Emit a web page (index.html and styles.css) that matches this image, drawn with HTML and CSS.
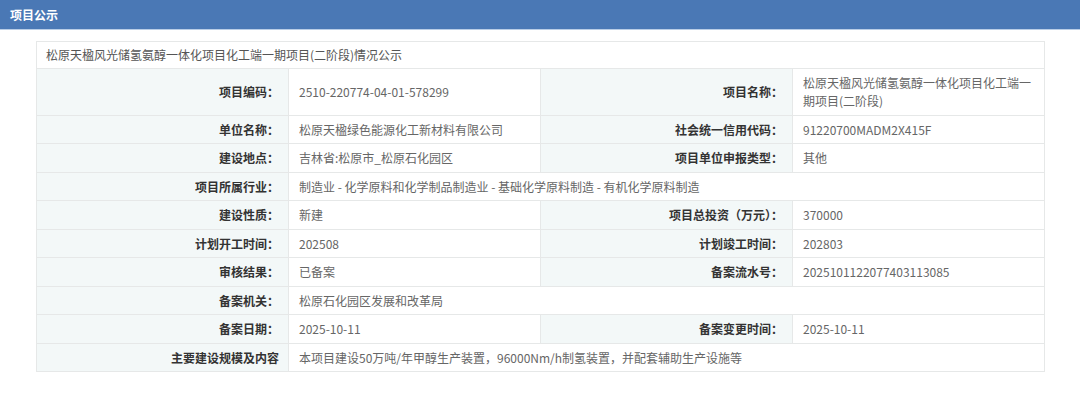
FILE: index.html
```html
<!DOCTYPE html>
<html lang="zh">
<head>
<meta charset="utf-8">
<link rel="stylesheet" href="styles.css">
</head>
<body>
<div class="bar">项目公示</div>
<div class="wrap">
<table class="info">
<colgroup><col class="c"><col class="c"><col class="c"><col class="c"></colgroup>
<tr><td class="cap" colspan="4">松原天楹风光储氢氨醇一体化项目化工端一期项目(二阶段)情况公示</td></tr>
<tr><th>项目编码：</th><td>2510-220774-04-01-578299</td><th>项目名称：</th><td>松原天楹风光储氢氨醇一体化项目化工端一期项目(二阶段)</td></tr>
<tr><th>单位名称：</th><td>松原天楹绿色能源化工新材料有限公司</td><th>社会统一信用代码：</th><td>91220700MADM2X415F</td></tr>
<tr><th>建设地点：</th><td>吉林省:松原市_松原石化园区</td><th>项目单位申报类型：</th><td>其他</td></tr>
<tr><th>项目所属行业：</th><td colspan="3">制造业 - 化学原料和化学制品制造业 - 基础化学原料制造 - 有机化学原料制造</td></tr>
<tr><th>建设性质：</th><td>新建</td><th>项目总投资（万元）：</th><td>370000</td></tr>
<tr><th>计划开工时间：</th><td>202508</td><th>计划竣工时间：</th><td>202803</td></tr>
<tr><th>审核结果：</th><td>已备案</td><th>备案流水号：</th><td>2025101122077403113085</td></tr>
<tr><th>备案机关：</th><td colspan="3">松原石化园区发展和改革局</td></tr>
<tr><th>备案日期：</th><td>2025-10-11</td><th>备案变更时间：</th><td>2025-10-11</td></tr>
<tr><th>主要建设规模及内容</th><td colspan="3">本项目建设50万吨/年甲醇生产装置，96000Nm/h制氢装置，并配套辅助生产设施等</td></tr>
</table>
</div>
</body>
</html>
```
FILE: styles.css
```css
html, body {
  margin: 0;
  padding: 0;
  background: #fff;
  font-family: "Noto Sans CJK SC", "Noto Sans", sans-serif;
  font-size: 12px;
}
.bar {
  height: 30px;
  line-height: 29px;
  background: #4a78b5;
  color: #fff;
  font-weight: bold;
  font-size: 12px;
  padding-left: 10px;
  border-bottom: 1px solid #b9cde6;
  box-sizing: border-box;
}
.wrap {
  padding: 11px 35px 0 36px;
}
.info {
  width: 100%;
  border-collapse: collapse;
  table-layout: fixed;
  border: 1px solid #e8eaea;
}
.info .c { width: 25%; }
.info td, .info th {
  border: 1px solid #e6e8e8;
  padding: 5px 10px 4.5px;
  line-height: 18px;
  font-size: 12px;
  vertical-align: middle;
}
.info th {
  background: #f3f8f8;
  color: #333;
  font-weight: bold;
  text-align: right;
  padding-right: 9px;
}
.info td {
  color: #666;
  text-align: left;
  word-break: break-all;
}
.info td.cap {
  color: #555;
  padding: 4px 9px 4px;
}
```
